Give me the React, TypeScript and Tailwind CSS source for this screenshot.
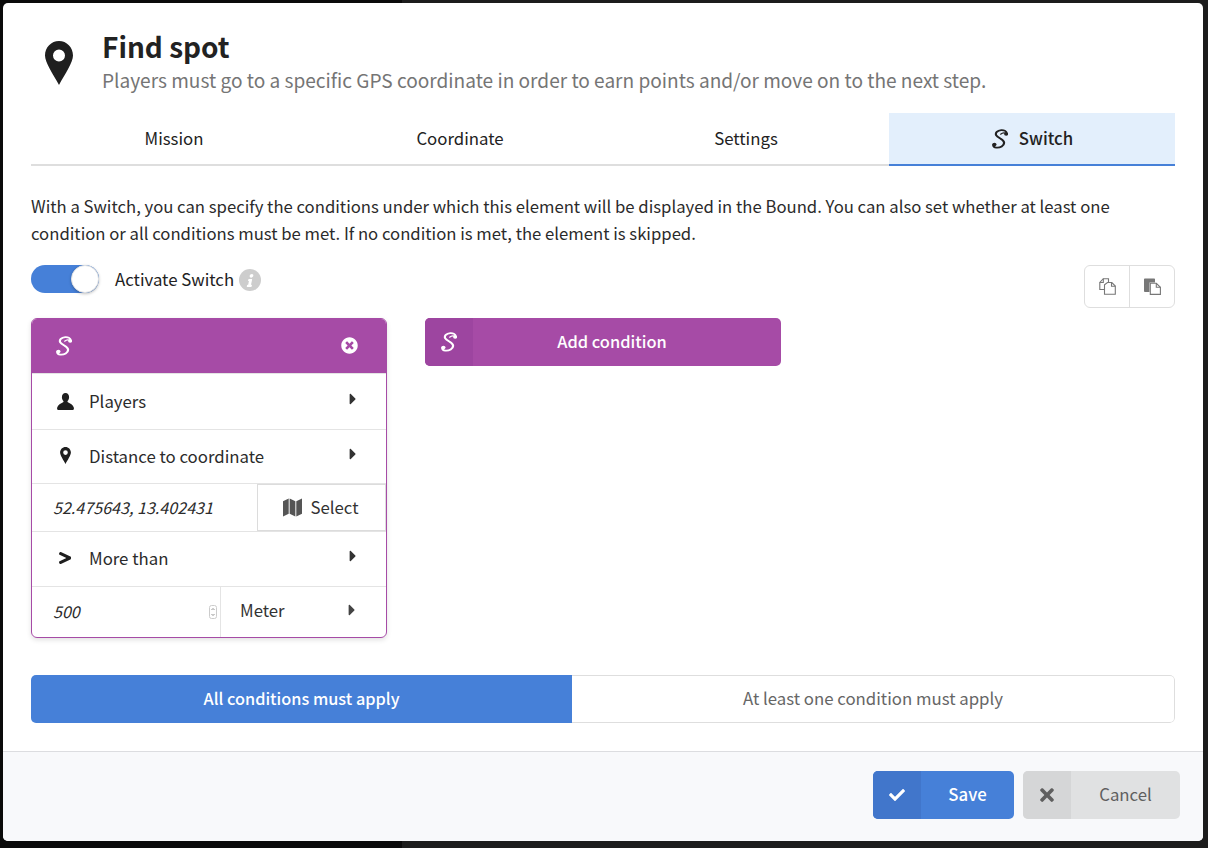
import { FaCaretRight, FaCheck, FaGreaterThan, FaInfo, FaTimes, FaTimesCircle } from "react-icons/fa";

function SwitchIcon({ className }: { className?: string }) {
  return (
    <svg viewBox="1 0 13.5 20" preserveAspectRatio="none" className={className} fill="none" aria-hidden="true">
      <path
        d="M13.2 4.6C13.6 2.2 11.2 0.9 8.8 1.1 5.6 1.4 3.400 3.800 4.600 6.400 5.900 9.200 11 10 11.200 13.600 11.400 16.800 7.800 19 4.600 18.600 3 18.400 1.800 17.400 2.200 16"
        stroke="currentColor"
        strokeWidth="1.800"
        strokeLinecap="round"
      />
      <path d="M8.400 5.200C9.600 3.800 11.600 3.600 13.200 4.600" stroke="currentColor" strokeWidth="1.200" strokeLinecap="round" />
      <circle cx="12.900" cy="5" r="1.700" fill="currentColor" />
      <circle cx="3" cy="15.600" r="1.800" fill="currentColor" />
    </svg>
  );
}

function PinIcon({ className }: { className?: string }) {
  return (
    <svg viewBox="0 0 28 44" className={className} aria-hidden="true">
      <path
        fill="currentColor"
        fillRule="evenodd"
        d="M14 0C6.300 0 0 6.300 0 14.500 0 21.500 8 33 14 44 20 33 28 21.500 28 14.500 28 6.300 21.700 0 14 0ZM14 8.500a6 6 0 1 1 0 12 6 6 0 0 1 0-12Z"
      />
    </svg>
  );
}

function UserIcon({ className }: { className?: string }) {
  return (
    <svg viewBox="0 0 17 17" className={className} aria-hidden="true">
      <path
        fill="currentColor"
        d="M8.500 0C6.200 0 4.900 1.700 4.900 4c0 1.600.6 3 1.500 4 .3.4.2 1-.3 1.300C3.800 10.500.9 11.800.2 14.400c-.2.8-.2 1.300 0 1.900.1.400.5.700 1 .700h14.600c.5 0 .9-.3 1-.7.2-.6.2-1.100 0-1.900-.7-2.600-3.600-3.900-5.900-5.100-.5-.3-.6-.9-.3-1.300.9-1 1.500-2.400 1.500-4C12.100 1.700 10.800 0 8.500 0Z"
      />
    </svg>
  );
}

function MapIcon({ className }: { className?: string }) {
  return (
    <svg viewBox="0 0 20 19" className={className} aria-hidden="true">
      <path fill="currentColor" d="M0 3 6 0V16L0 19ZM7 0 13 3V19L7 16ZM14 3 20 0V16L14 19Z" />
    </svg>
  );
}

function CopyIcon({ className }: { className?: string }) {
  return (
    <svg viewBox="0 0 17 17" className={className} fill="none" stroke="currentColor" strokeWidth="1.100" aria-hidden="true">
      <path d="M5 11.500H.8V4.500L4.300.7H9.500V4.500" />
      <path d="M4.300.7V4.500H.8" />
      <path fill="white" d="M5.500 16.300V6.800L8.500 4.500H12.800L16.300 8V16.300Z" />
      <path d="M12.500 4.500V8.200H16.300" />
    </svg>
  );
}

function PasteIcon({ className }: { className?: string }) {
  return (
    <svg viewBox="0 0 17 17" className={className} aria-hidden="true">
      <path fill="currentColor" d="M0 1.500C0 .9.500.5 1 .5H10C10.600.5 11 .9 11 1.500V4.500H5.500V14H1C.5 14 0 13.500 0 13Z" />
      <path fill="white" stroke="currentColor" strokeWidth="1.100" d="M6.300 16.400V5.300H12.300L16.400 9.300V16.400Z" />
      <path fill="none" stroke="currentColor" strokeWidth="1.100" d="M12.300 5.300V9.300H16.400" />
    </svg>
  );
}

function Row({ icon, label }: { icon: React.ReactNode; label: string }) {
  return (
    <div className="flex h-full items-center pl-[25px] pr-[24px]">
      <span className="flex w-[32px] shrink-0 items-center text-[#1f1f1f]">{icon}</span>
      <span className="flex-1 text-[16.8px] text-[#2b2b2b]">{label}</span>
      <FaCaretRight className="mb-[6px] text-[18px] text-[#333]" />
    </div>
  );
}

const tabs = ["Mission", "Coordinate", "Settings"];

export default function App() {
  return (
    <div
      className="h-[848px] w-[1208px] overflow-hidden bg-[linear-gradient(90deg,#0a0a0a_402px,#1c1c1c_402px)] pl-[3px] pt-[3px] text-[#1f1f1f]"
      style={{ fontFamily: '"Noto Sans CJK SC", "Noto Sans", sans-serif' }}
    >
      <div className="flex h-[838px] w-[1200px] flex-col overflow-hidden rounded-[5px] bg-white">
        <div className="flex-1 px-[28px]">
          <div className="flex h-[110px] items-start pl-[14px] pt-[22px]">
            <PinIcon className="mt-[16px] h-[44px] w-[28px] text-[#1f1f1f]" />
            <div className="ml-[29px]">
              <div className="text-[28px] font-bold leading-[42px] text-[#222]">Find spot</div>
              <div className="text-[19.08px] leading-[26px] text-[#757575]">
                Players must go to a specific GPS coordinate in order to earn points and/or move on to the next step.
              </div>
            </div>
          </div>

          <div className="flex h-[53px]">
            {tabs.map((t) => (
              <div key={t} className="flex w-1/4 items-center justify-center border-b-2 border-[#dedede] text-[16.8px] text-[#222]">
                {t}
              </div>
            ))}
            <div className="flex w-1/4 items-center justify-center gap-[11px] border-b-2 border-[#4680d8] bg-[#e3effc] pl-[1px] text-[16.8px] font-medium text-[#222]">
              <SwitchIcon className="h-[20px] w-[16px]" />
              Switch
            </div>
          </div>

          <p className="mt-[27px] text-[16.7px] leading-[27px] text-[#2b2b2b]">
            With a Switch, you can specify the conditions under which this element will be displayed in the Bound. You can also set whether at least one
            condition or all conditions must be met. If no condition is met, the element is skipped.
          </p>

          <div className="mt-[9px] flex items-start justify-between">
            <div className="flex items-center pt-[9px]">
              <div className="flex h-[28px] w-[68px] justify-end rounded-full bg-[#4680d8]">
                <div className="h-[28px] w-[28px] rounded-full border border-[#e4e4e4] bg-white shadow-[0_1px_3px_rgba(0,0,0,0.25)]" />
              </div>
              <span className="ml-[16px] pt-[2px] text-[16.8px] text-[#222]">Activate Switch</span>
              <span className="ml-[5px] mt-[2px] flex h-[22px] w-[22px] items-center justify-center rounded-full bg-[#cdcdcd] text-white">
                <FaInfo className="-skew-x-12 text-[13px]" />
              </span>
            </div>
            <div className="mt-[9px] flex h-[43px] rounded-[6px] border border-[#dedede] text-[#777]">
              <div className="flex w-[45px] items-center justify-center border-r border-[#dedede]">
                <CopyIcon className="h-[17px] w-[17px]" />
              </div>
              <div className="flex w-[44px] items-center justify-center">
                <PasteIcon className="h-[17px] w-[17px]" />
              </div>
            </div>
          </div>

          <div className="mt-[10px] flex items-start gap-[38px]">
            <div className="w-[356px] overflow-hidden rounded-[6px] border border-[#a64ba6] shadow-[0_2px_5px_rgba(0,0,0,0.12)]">
              <div className="flex h-[55px] items-center justify-between border-b border-[#e4e4e4] bg-[#a64ba6] pl-[24px] pr-[28px] text-white">
                <SwitchIcon className="h-[20px] w-[16px]" />
                <FaTimesCircle className="mb-[1px] text-[17px]" />
              </div>
              <div className="h-[56px] border-b border-[#e4e4e4]">
                <Row icon={<UserIcon className="h-[17px] w-[17px]" />} label="Players" />
              </div>
              <div className="h-[54px] border-b border-[#e4e4e4]">
                <Row icon={<PinIcon className="mb-[3px] ml-[3px] h-[17px] w-[11px]" />} label="Distance to coordinate" />
              </div>
              <div className="flex h-[48px] border-b border-[#e4e4e4]">
                <div className="flex flex-1 items-center pl-[21px] text-[16.1px] italic text-[#2b2b2b]">52.475643, 13.402431</div>
                <div className="flex w-[129px] items-center justify-center gap-[8px] border border-[#dcdcdc] pr-[1px] text-[16.8px] text-[#333]">
                  <MapIcon className="h-[19px] w-[19px] text-[#555]" />
                  Select
                </div>
              </div>
              <div className="h-[55px] border-b border-[#e4e4e4]">
                <Row icon={<FaGreaterThan className="mb-[3px] text-[16px]" />} label="More than" />
              </div>
              <div className="flex h-[50px]">
                <div className="flex w-[189px] items-center justify-between border-r border-[#e4e4e4] pl-[21px] pr-[3px] text-[16.1px] italic text-[#2b2b2b]">
                  <span className="-mt-[1px]">500</span>
                  <svg viewBox="0 0 8 14" className="h-[14px] w-[8px] text-[#777]" fill="none" aria-hidden="true">
                    <rect x="0.5" y="0.5" width="7" height="13" rx="2" stroke="#ccc" />
                    <path d="M2.500 5 4 3.500 5.500 5M2.500 9 4 10.500 5.500 9" stroke="currentColor" strokeWidth="0.8" />
                  </svg>
                </div>
                <div className="flex flex-1 items-center pl-[19px] pr-[25px]">
                  <span className="-mt-[3px] flex-1 text-[16.8px] text-[#333]">Meter</span>
                  <FaCaretRight className="mb-[4px] text-[18px] text-[#444]" />
                </div>
              </div>
            </div>

            <div className="flex h-[48px] w-[356px] overflow-hidden rounded-[5px] bg-[#a64ba6] text-white">
              <div className="flex w-[48px] items-center justify-center bg-[#9d45a0]">
                <SwitchIcon className="h-[20px] w-[16px]" />
              </div>
              <div className="flex flex-1 items-center justify-center pb-[1px] pr-[30px] text-[16.4px] font-medium">Add condition</div>
            </div>
          </div>

          <div className="mt-[37px] flex h-[48px] overflow-hidden rounded-[5px]">
            <div className="flex w-[541px] items-center justify-center bg-[#4680d8] pb-[1px] text-[16.3px] font-medium text-white">All conditions must apply</div>
            <div className="flex flex-1 items-center justify-center rounded-r-[5px] border border-l-0 border-[#dedede] text-[16.8px] text-[#666]">
              At least one condition must apply
            </div>
          </div>
        </div>

        <div className="flex h-[90px] items-start justify-end gap-[9px] border-t border-[#dcdde0] bg-[#f8f9fb] pr-[23px] pt-[19px]">
          <div className="flex h-[48px] w-[141px] overflow-hidden rounded-[5px] bg-[#4680d8] text-white">
            <div className="flex w-[48px] items-center justify-center bg-[#4176cb]">
              <FaCheck className="text-[16px]" />
            </div>
            <div className="flex flex-1 items-center justify-center text-[16.8px] font-medium">Save</div>
          </div>
          <div className="flex h-[48px] w-[157px] overflow-hidden rounded-[5px] bg-[#e0e1e2] text-[#5f5f5f]">
            <div className="flex w-[48px] items-center justify-center bg-[#d5d6d7]">
              <FaTimes className="text-[20px]" />
            </div>
            <div className="flex flex-1 items-center justify-center text-[16.8px]">Cancel</div>
          </div>
        </div>
      </div>
    </div>
  );
}
